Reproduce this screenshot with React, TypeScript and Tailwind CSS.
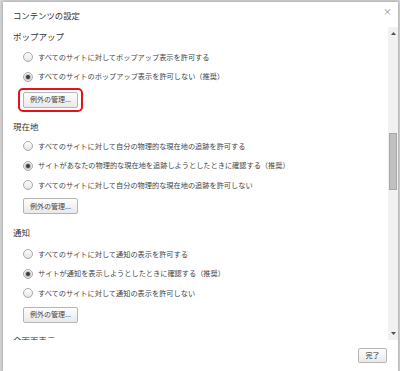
import React from "react";

const font = "font-['Noto_Sans_CJK_JP','Noto_Sans_CJK_SC',sans-serif]";

function Radio({ checked }: { checked?: boolean }) {
  return (
    <span className="w-[10px] h-[10px] rounded-full border border-[#a9a9a9] bg-gradient-to-b from-[#ffffff] to-[#e4e4e4] flex items-center justify-center shrink-0">
      {checked && <span className="w-[4px] h-[4px] rounded-full bg-[#3a3a3a] shadow-[0_0_1px_1px_rgba(120,120,120,0.5)]" />}
    </span>
  );
}

function Row({ label, checked }: { label: string; checked?: boolean }) {
  return (
    <div className="h-[19.5px] flex items-center pl-[20px] gap-[5px]">
      <Radio checked={checked} />
      <span className="text-[7.2px] leading-none text-[#444] whitespace-nowrap">{label}</span>
    </div>
  );
}

function ExBtn({ highlight }: { highlight?: boolean }) {
  return (
    <div className="relative ml-[20px] w-[55px] h-[16px]">
      <div className="w-full h-full border border-[#b5b5b5] rounded-[2px] bg-gradient-to-b from-[#fdfdfd] to-[#e9e9e9] flex items-center justify-center text-[7px] leading-none text-[#444] whitespace-nowrap">
        例外の管理...
      </div>
      {highlight && (
        <div className="absolute -left-[5px] -right-[5px] -top-[4px] -bottom-[4px] border-2 border-[#e5121b] rounded-[5px]" />
      )}
    </div>
  );
}

function Heading({ children }: { children: React.ReactNode }) {
  return (
    <div className="h-[18px] flex items-center pl-[10px] text-[8.5px] leading-none text-[#333] whitespace-nowrap">
      {children}
    </div>
  );
}

export default function App() {
  return (
    <div className={`w-[400px] h-[371px] bg-[#d3d3d3] overflow-hidden pl-[3px] pt-[2px] ${font}`}>
      <div className="w-[395px] h-[369px] bg-white flex flex-col shadow-[0_0_3px_rgba(0,0,0,0.3)]">
        {/* header */}
        <div className="h-[25px] flex items-center justify-between pl-[10px] pr-[6px] shrink-0">
          <span className="text-[8.4px] leading-none text-[#333] mt-[1px]">コンテンツの設定</span>
          <span className="text-[9px] leading-none text-[#888] -mt-[6px]">×</span>
        </div>
        {/* body */}
        <div className="h-[313px] flex shrink-0">
          <div className="flex-1 overflow-hidden">
            <Heading>ポップアップ</Heading>
            <div className="pt-[2.5px]">
              <Row label="すべてのサイトに対してポップアップ表示を許可する" />
              <Row label="すべてのサイトのポップアップ表示を許可しない（推奨）" checked />
            </div>
            <div className="mt-[5px] mb-[9.5px]">
              <ExBtn highlight />
            </div>

            <Heading>現在地</Heading>
            <div className="pt-[1.5px]">
              <Row label="すべてのサイトに対して自分の物理的な現在地の追跡を許可する" />
              <Row label="サイトがあなたの物理的な現在地を追跡しようとしたときに確認する（推奨）" checked />
              <Row label="すべてのサイトに対して自分の物理的な現在地の追跡を許可しない" />
            </div>
            <div className="mt-[3px] mb-[9px]">
              <ExBtn />
            </div>

            <Heading>通知</Heading>
            <div className="pt-[3.5px]">
              <Row label="すべてのサイトに対して通知の表示を許可する" />
              <Row label="サイトが通知を表示しようとしたときに確認する（推奨）" checked />
              <Row label="すべてのサイトに対して通知の表示を許可しない" />
            </div>
            <div className="mt-[3.5px] mb-[9px]">
              <ExBtn />
            </div>

            <Heading>全画面表示</Heading>
          </div>
          {/* scrollbar */}
          <div className="w-[10px] bg-[#f1f1f1] flex flex-col items-center relative">
            <svg width="5" height="3" viewBox="0 0 5 3" className="mt-[5px]">
              <polygon points="2.5,0 5,3 0,3" fill="#505050" />
            </svg>
            <div className="absolute left-[1px] top-[106px] w-[8px] h-[57px] bg-[#c0c0c0] border border-[#a9a9a9]" />
            <div className="flex-1" />
            <svg width="5" height="3" viewBox="0 0 5 3" className="mb-[5px]">
              <polygon points="0,0 5,0 2.5,3" fill="#505050" />
            </svg>
          </div>
        </div>
        {/* footer */}
        <div className="flex-1 flex justify-end items-start pt-[8px] pr-[11px]">
          <div className="w-[29px] h-[15px] border border-[#b5b5b5] rounded-[2px] bg-gradient-to-b from-[#fdfdfd] to-[#e9e9e9] flex items-center justify-center text-[7px] leading-none text-[#333]">
            完了
          </div>
        </div>
      </div>
    </div>
  );
}
